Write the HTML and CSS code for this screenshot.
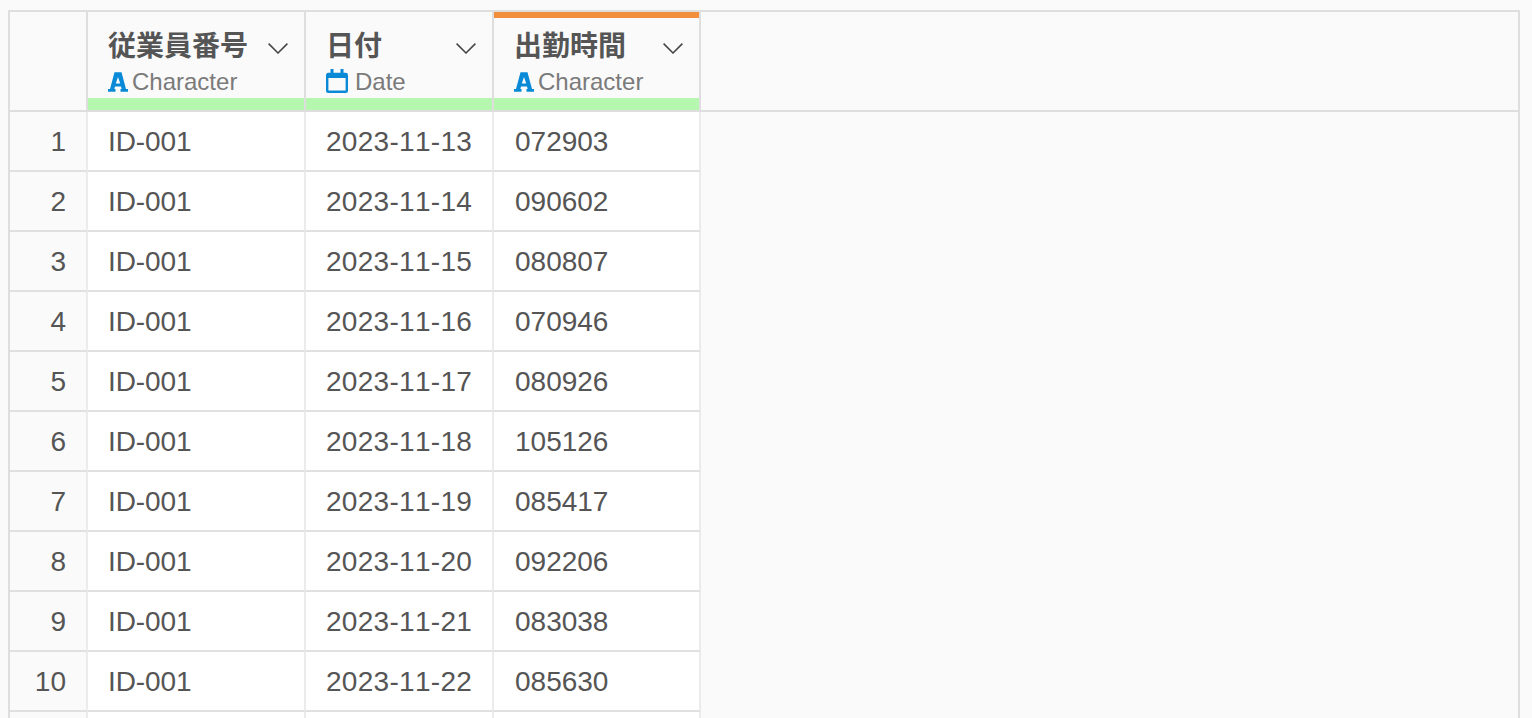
FILE: index.html
```html
<!DOCTYPE html>
<html lang="ja">
<head>
<meta charset="utf-8">
<title>Table</title>
<link rel="stylesheet" href="styles.css">
</head>
<body>
<svg class="defs" width="0" height="0" aria-hidden="true">
  <symbol id="i-a" viewBox="0 0 20 20"><path fill="#0a8ad6" fill-rule="evenodd" d="M6.500.3h7L18 17h2v2.700h-7.500V17h1.100l-.6-2.500H7L6.400 17h1.100v2.700H0V17h2L6.500.3ZM10 5l-2.200 6.500h4.400L10 5Z"/></symbol>
  <symbol id="i-cal" viewBox="0 0 22 24"><path fill="none" stroke="#0a8ad6" stroke-width="2.400" d="M2.200 5h17.600a1 1 0 0 1 1 1v15.800a1 1 0 0 1-1 1H2.200a1 1 0 0 1-1-1V6a1 1 0 0 1 1-1Z"/><path fill="#0a8ad6" d="M1 4h20v5H1zM4.500 0h3v5h-3zM14.500 0h3v5h-3z"/></symbol>
  <symbol id="i-chev" viewBox="0 0 20 11"><path fill="none" stroke="#444" stroke-width="1.500" d="M.6.6 10 10 19.400.6"/></symbol>
</svg>
<main class="panel">
  <div class="head">
    <div class="corner"></div>
    <div class="hcell c1">
      <div class="title"><span>従業員番号</span><svg class="chev"><use href="#i-chev"/></svg></div>
      <div class="type"><svg class="ia"><use href="#i-a"/></svg>Character</div>
    </div>
    <div class="hcell c2">
      <div class="title"><span>日付</span><svg class="chev"><use href="#i-chev"/></svg></div>
      <div class="type"><svg class="ical"><use href="#i-cal"/></svg>Date</div>
    </div>
    <div class="hcell c3 active">
      <div class="title"><span>出勤時間</span><svg class="chev"><use href="#i-chev"/></svg></div>
      <div class="type"><svg class="ia"><use href="#i-a"/></svg>Character</div>
    </div>
  </div>
  <div class="row"><div class="num">1</div><div class="cell c1">ID-001</div><div class="cell c2">2023-11-13</div><div class="cell c3">072903</div></div>
  <div class="row"><div class="num">2</div><div class="cell c1">ID-001</div><div class="cell c2">2023-11-14</div><div class="cell c3">090602</div></div>
  <div class="row"><div class="num">3</div><div class="cell c1">ID-001</div><div class="cell c2">2023-11-15</div><div class="cell c3">080807</div></div>
  <div class="row"><div class="num">4</div><div class="cell c1">ID-001</div><div class="cell c2">2023-11-16</div><div class="cell c3">070946</div></div>
  <div class="row"><div class="num">5</div><div class="cell c1">ID-001</div><div class="cell c2">2023-11-17</div><div class="cell c3">080926</div></div>
  <div class="row"><div class="num">6</div><div class="cell c1">ID-001</div><div class="cell c2">2023-11-18</div><div class="cell c3">105126</div></div>
  <div class="row"><div class="num">7</div><div class="cell c1">ID-001</div><div class="cell c2">2023-11-19</div><div class="cell c3">085417</div></div>
  <div class="row"><div class="num">8</div><div class="cell c1">ID-001</div><div class="cell c2">2023-11-20</div><div class="cell c3">092206</div></div>
  <div class="row"><div class="num">9</div><div class="cell c1">ID-001</div><div class="cell c2">2023-11-21</div><div class="cell c3">083038</div></div>
  <div class="row"><div class="num">10</div><div class="cell c1">ID-001</div><div class="cell c2">2023-11-22</div><div class="cell c3">085630</div></div>
  <div class="row"><div class="num"></div><div class="cell c1"></div><div class="cell c2"></div><div class="cell c3"></div></div>
</main>
</body>
</html>
```
FILE: styles.css
```css
html, body { margin: 0; height: 100%; overflow: hidden; background: #fafafa; }
body { padding: 10px 12px 0 8px; box-sizing: border-box; font-family: "Liberation Sans", "Noto Sans CJK JP", sans-serif; color: #555; font-kerning: none; }
.defs { position: absolute; }
.panel { border: 2px solid #dedede; border-bottom: 0; background: #fafafa; height: 720px; }
.head { display: flex; height: 100px; box-sizing: border-box; border-bottom: 2px solid #dedede; }
.corner { width: 76px; border-right: 2px solid #dedede; }
.hcell { position: relative; height: 98px; border-right: 2px solid #dedede; display: flex; flex-direction: column; background: linear-gradient(#b6f7b0, #b6f7b0) bottom / 100% 12px no-repeat; }
.c1 { width: 216px; }
.c2 { width: 186px; }
.c3 { width: 205px; }
.hcell.active::before { content: ""; position: absolute; left: 0; right: 0; top: 0; height: 6px; background: #f28f3c; }
.title { display: flex; justify-content: space-between; align-items: center; height: 28px; margin-top: 21px; font-size: 28px; line-height: 28px; font-weight: 700; color: #555; padding: 0 16px 0 20px; }
.chev { width: 20px; height: 11px; margin-top: 3px; }
.type { display: flex; align-items: center; height: 26px; margin-top: 8px; font-size: 24px; line-height: 26px; color: #7a7a7a; padding-left: 20px; }
.ia { width: 20px; height: 20px; margin-right: 4px; }
.ical { width: 22px; height: 24px; margin-right: 7px; margin-top: -2px; }
.row { display: flex; height: 60px; }
.num { width: 78px; box-sizing: border-box; padding-right: 20px; text-align: right; font-size: 28px; line-height: 60px; border-right: 2px solid #ebebeb; border-bottom: 2px solid #e0e0e0; }
.cell { height: 58px; background: #fff; font-size: 28px; line-height: 60px; border-right: 2px solid #ebebeb; border-bottom: 2px solid #e0e0e0; text-indent: 20px; }
.cell.c1 { letter-spacing: -.1px; }
.cell.c2 { letter-spacing: .3px; }
.cell.c3 { text-indent: 21px; }
```
